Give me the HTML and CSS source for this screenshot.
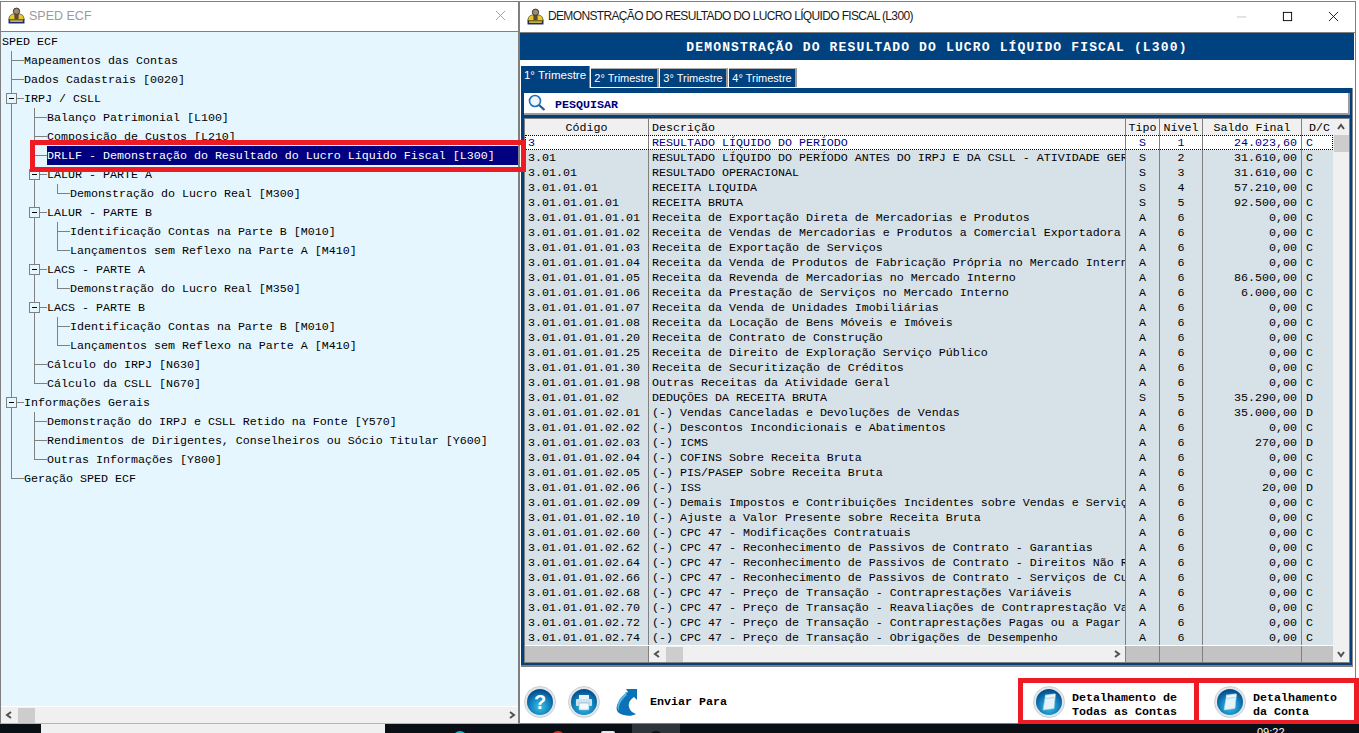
FILE: index.html
```html
<!DOCTYPE html>
<html lang="pt-BR">
<head>
<meta charset="utf-8">
<title>SPED ECF</title>
<link rel="stylesheet" href="styles.css">
</head>
<body>
<svg class="defs" width="0" height="0" aria-hidden="true">
  <defs>
    <radialGradient id="orb" cx="50%" cy="68%" r="62%">
      <stop offset="0%" stop-color="#3cc0e6"/>
      <stop offset="55%" stop-color="#1488c2"/>
      <stop offset="100%" stop-color="#04508f"/>
    </radialGradient>
    <symbol id="appicon" viewBox="0 0 16 16">
      <rect x="0.5" y="11" width="15" height="4.5" fill="#1c2a6e"/>
      <path d="M1 11c0-3 2-4 4-4.500h6c2 .5 4 1.500 4 4.500v1H1z" fill="#e8c828" stroke="#3a3000" stroke-width=".6"/>
      <rect x="6" y="6.500" width="4" height="5" fill="#5b4a35"/>
      <circle cx="8" cy="4" r="3" fill="#9a8a72" stroke="#2e2a22" stroke-width=".8"/>
      <rect x="2" y="12.500" width="12" height="1.500" fill="#d8c840"/>
    </symbol>
    <symbol id="orbbase" viewBox="0 0 32 32">
      <circle cx="16" cy="16" r="15.500" fill="#e4e7ea" stroke="#c3c8ce" stroke-width=".8"/>
      <circle cx="16" cy="16" r="13" fill="url(#orb)"/>
    </symbol>
    <symbol id="noteicon" viewBox="0 0 32 32">
      <path d="M12.500 9.500 22.500 8 21 22.500 10 24z" fill="#e6f3fa" stroke="#a9d0e4" stroke-width=".6"/>
      <path d="M13 8.500v2.500M15 8.300v2.500M17 8v2.500M19 7.800v2.500M21 7.600v2.500" stroke="#f7fcff" stroke-width="1"/>
      <path d="M13 12.500l8-1" stroke="#9cc8df" stroke-width=".7"/>
    </symbol>
    <symbol id="chev-l" viewBox="0 0 8 8"><path d="M6 1 2 4l4 3" fill="none" stroke="#505050" stroke-width="2"/></symbol>
    <symbol id="chev-r" viewBox="0 0 8 8"><path d="M2 1l4 3-4 3" fill="none" stroke="#505050" stroke-width="2"/></symbol>
    <symbol id="chev-u" viewBox="0 0 8 8"><path d="M1 6l3-4 3 4" fill="none" stroke="#505050" stroke-width="2"/></symbol>
    <symbol id="chev-d" viewBox="0 0 8 8"><path d="M1 2l3 4 3-4" fill="none" stroke="#505050" stroke-width="2"/></symbol>
  </defs>
</svg>

<div class="desktop">
  <section class="window window-tree">
    <header class="titlebar">
      <svg class="appicon"><use href="#appicon"/></svg>
      <span class="title title-muted">SPED ECF</span>
      <svg class="close close-muted" viewBox="0 0 12 12"><path d="M1 1l10 10M11 1 1 11" stroke="#9a9a9a" fill="none"/></svg>
    </header>
    <div class="tree">
      <svg class="tree-lines" viewBox="1 32 517 675">
        <g stroke="#808080" fill="none" shape-rendering="crispEdges">
          <path d="M11.500 51V478.500"/>
          <path d="M11.500 60.500H24M11.500 79.500H24M17 98.500H24M17 402.500H24M11.500 478.500H24"/>
          <path d="M34.500 108V383.500M34.500 412V459.500"/>
          <path d="M34.500 117.500H47M34.500 136.500H47M34.500 155.500H47M40 174.500H47M40 212.500H47M40 269.500H47M40 307.500H47M34.500 364.500H47M34.500 383.500H47M34.500 421.500H47M34.500 440.500H47M34.500 459.500H47"/>
          <path d="M57.500 184V193.500H70M57.500 222V250.500H70M57.500 231.500H70M57.500 279V288.500H70M57.500 317V345.500H70M57.500 326.500H70"/>
          <g fill="#e6f6ff">
            <rect x="6.500" y="93.500" width="10" height="10"/>
            <rect x="6.500" y="397.500" width="10" height="10"/>
            <rect x="29.500" y="169.500" width="10" height="10"/>
            <rect x="29.500" y="207.500" width="10" height="10"/>
            <rect x="29.500" y="264.500" width="10" height="10"/>
            <rect x="29.500" y="302.500" width="10" height="10"/>
          </g>
          <path stroke="#000" d="M9 98.500h5M9 402.500h5M32 174.500h5M32 212.500h5M32 269.500h5M32 307.500h5"/>
        </g>
      </svg>
      <div class="node lv0">SPED ECF</div>
      <div class="node lv1">Mapeamentos das Contas</div>
      <div class="node lv1">Dados Cadastrais [0020]</div>
      <div class="node lv1">IRPJ / CSLL</div>
      <div class="node lv2">Balanço Patrimonial [L100]</div>
      <div class="node lv2">Composição de Custos [L210]</div>
      <div class="node lv2 selected"><span class="node-sel">DRLLF - Demonstração do Resultado do Lucro Líquido Fiscal [L300]</span></div>
      <div class="node lv2">LALUR - PARTE A</div>
      <div class="node lv3">Demonstração do Lucro Real [M300]</div>
      <div class="node lv2">LALUR - PARTE B</div>
      <div class="node lv3">Identificação Contas na Parte B [M010]</div>
      <div class="node lv3">Lançamentos sem Reflexo na Parte A [M410]</div>
      <div class="node lv2">LACS - PARTE A</div>
      <div class="node lv3">Demonstração do Lucro Real [M350]</div>
      <div class="node lv2">LACS - PARTE B</div>
      <div class="node lv3">Identificação Contas na Parte B [M010]</div>
      <div class="node lv3">Lançamentos sem Reflexo na Parte A [M410]</div>
      <div class="node lv2">Cálculo do IRPJ [N630]</div>
      <div class="node lv2">Cálculo da CSLL [N670]</div>
      <div class="node lv1">Informações Gerais</div>
      <div class="node lv2">Demonstração do IRPJ e CSLL Retido na Fonte [Y570]</div>
      <div class="node lv2">Rendimentos de Dirigentes, Conselheiros ou Sócio Titular [Y600]</div>
      <div class="node lv2">Outras Informações [Y800]</div>
      <div class="node lv1">Geração SPED ECF</div>
    </div>
    <div class="hscroll">
      <svg class="chev"><use href="#chev-l"/></svg>
      <span class="thumb"></span>
      <svg class="chev chev-end"><use href="#chev-r"/></svg>
    </div>
  </section>

  <section class="window window-main">
    <header class="titlebar titlebar-main">
      <svg class="appicon"><use href="#appicon"/></svg>
      <span class="title title-main">DEMONSTRAÇÃO DO RESULTADO DO LUCRO LÍQUIDO FISCAL (L300)</span>
      <div class="wincontrols">
        <svg class="wc" viewBox="0 0 12 12"><path d="M1 6.500h10" stroke="#c4c4c4" fill="none"/></svg>
        <svg class="wc" viewBox="0 0 12 12"><rect x="1.500" y="1.500" width="9" height="9" stroke="#000" fill="none"/></svg>
        <svg class="wc" viewBox="0 0 12 12"><path d="M1 1l10 10M11 1 1 11" stroke="#111" fill="none"/></svg>
      </div>
    </header>
    <div class="banner">DEMONSTRAÇÃO DO RESULTADO DO LUCRO LÍQUIDO FISCAL (L300)</div>
    <nav class="tabs">
      <span class="tab tab-active">1° Trimestre</span>
      <span class="tab">2° Trimestre</span>
      <span class="tab">3° Trimestre</span>
      <span class="tab">4° Trimestre</span>
    </nav>
    <div class="panel">
      <div class="search">
        <svg class="search-icon" viewBox="0 0 18 18"><circle cx="7" cy="7" r="5.500" fill="#eef6fc" stroke="#1d6fb8" stroke-width="1.600"/><path d="M11 11l5.500 5" stroke="#1d5a98" stroke-width="2.200" fill="none"/></svg>
        <span class="search-label">PESQUISAR</span>
      </div>
      <div class="grid">
        <div class="grid-main">
          <div class="row row-head"><span>Código</span><span class="left">Descrição</span><span>Tipo</span><span>Nível</span><span>Saldo Final</span><span>D/C</span></div>
          <div class="row row-current"><span>3</span><span>RESULTADO LÍQUIDO DO PERÍODO</span><span>S</span><span>1</span><span>24.023,60</span><span>C</span></div>
          <div class="row"><span>3.01</span><span>RESULTADO LÍQUIDO DO PERÍODO ANTES DO IRPJ E DA CSLL - ATIVIDADE GERAL</span><span>S</span><span>2</span><span>31.610,00</span><span>C</span></div>
          <div class="row"><span>3.01.01</span><span>RESULTADO OPERACIONAL</span><span>S</span><span>3</span><span>31.610,00</span><span>C</span></div>
          <div class="row"><span>3.01.01.01</span><span>RECEITA LIQUIDA</span><span>S</span><span>4</span><span>57.210,00</span><span>C</span></div>
          <div class="row"><span>3.01.01.01.01</span><span>RECEITA BRUTA</span><span>S</span><span>5</span><span>92.500,00</span><span>C</span></div>
          <div class="row"><span>3.01.01.01.01.01</span><span>Receita de Exportação Direta de Mercadorias e Produtos</span><span>A</span><span>6</span><span>0,00</span><span>C</span></div>
          <div class="row"><span>3.01.01.01.01.02</span><span>Receita de Vendas de Mercadorias e Produtos a Comercial Exportadora</span><span>A</span><span>6</span><span>0,00</span><span>C</span></div>
          <div class="row"><span>3.01.01.01.01.03</span><span>Receita de Exportação de Serviços</span><span>A</span><span>6</span><span>0,00</span><span>C</span></div>
          <div class="row"><span>3.01.01.01.01.04</span><span>Receita da Venda de Produtos de Fabricação Própria no Mercado Interno</span><span>A</span><span>6</span><span>0,00</span><span>C</span></div>
          <div class="row"><span>3.01.01.01.01.05</span><span>Receita da Revenda de Mercadorias no Mercado Interno</span><span>A</span><span>6</span><span>86.500,00</span><span>C</span></div>
          <div class="row"><span>3.01.01.01.01.06</span><span>Receita da Prestação de Serviços no Mercado Interno</span><span>A</span><span>6</span><span>6.000,00</span><span>C</span></div>
          <div class="row"><span>3.01.01.01.01.07</span><span>Receita da Venda de Unidades Imobiliárias</span><span>A</span><span>6</span><span>0,00</span><span>C</span></div>
          <div class="row"><span>3.01.01.01.01.08</span><span>Receita da Locação de Bens Móveis e Imóveis</span><span>A</span><span>6</span><span>0,00</span><span>C</span></div>
          <div class="row"><span>3.01.01.01.01.20</span><span>Receita de Contrato de Construção</span><span>A</span><span>6</span><span>0,00</span><span>C</span></div>
          <div class="row"><span>3.01.01.01.01.25</span><span>Receita de Direito de Exploração Serviço Público</span><span>A</span><span>6</span><span>0,00</span><span>C</span></div>
          <div class="row"><span>3.01.01.01.01.30</span><span>Receita de Securitização de Créditos</span><span>A</span><span>6</span><span>0,00</span><span>C</span></div>
          <div class="row"><span>3.01.01.01.01.98</span><span>Outras Receitas da Atividade Geral</span><span>A</span><span>6</span><span>0,00</span><span>C</span></div>
          <div class="row"><span>3.01.01.01.02</span><span>DEDUÇÕES DA RECEITA BRUTA</span><span>S</span><span>5</span><span>35.290,00</span><span>D</span></div>
          <div class="row"><span>3.01.01.01.02.01</span><span>(-) Vendas Canceladas e Devoluções de Vendas</span><span>A</span><span>6</span><span>35.000,00</span><span>D</span></div>
          <div class="row"><span>3.01.01.01.02.02</span><span>(-) Descontos Incondicionais e Abatimentos</span><span>A</span><span>6</span><span>0,00</span><span>C</span></div>
          <div class="row"><span>3.01.01.01.02.03</span><span>(-) ICMS</span><span>A</span><span>6</span><span>270,00</span><span>D</span></div>
          <div class="row"><span>3.01.01.01.02.04</span><span>(-) COFINS Sobre Receita Bruta</span><span>A</span><span>6</span><span>0,00</span><span>C</span></div>
          <div class="row"><span>3.01.01.01.02.05</span><span>(-) PIS/PASEP Sobre Receita Bruta</span><span>A</span><span>6</span><span>0,00</span><span>C</span></div>
          <div class="row"><span>3.01.01.01.02.06</span><span>(-) ISS</span><span>A</span><span>6</span><span>20,00</span><span>D</span></div>
          <div class="row"><span>3.01.01.01.02.09</span><span>(-) Demais Impostos e Contribuições Incidentes sobre Vendas e Serviços</span><span>A</span><span>6</span><span>0,00</span><span>C</span></div>
          <div class="row"><span>3.01.01.01.02.10</span><span>(-) Ajuste a Valor Presente sobre Receita Bruta</span><span>A</span><span>6</span><span>0,00</span><span>C</span></div>
          <div class="row"><span>3.01.01.01.02.60</span><span>(-) CPC 47 - Modificações Contratuais</span><span>A</span><span>6</span><span>0,00</span><span>C</span></div>
          <div class="row"><span>3.01.01.01.02.62</span><span>(-) CPC 47 - Reconhecimento de Passivos de Contrato - Garantias</span><span>A</span><span>6</span><span>0,00</span><span>C</span></div>
          <div class="row"><span>3.01.01.01.02.64</span><span>(-) CPC 47 - Reconhecimento de Passivos de Contrato - Direitos Não Resgatados</span><span>A</span><span>6</span><span>0,00</span><span>C</span></div>
          <div class="row"><span>3.01.01.01.02.66</span><span>(-) CPC 47 - Reconhecimento de Passivos de Contrato - Serviços de Custódia</span><span>A</span><span>6</span><span>0,00</span><span>C</span></div>
          <div class="row"><span>3.01.01.01.02.68</span><span>(-) CPC 47 - Preço de Transação - Contraprestações Variáveis</span><span>A</span><span>6</span><span>0,00</span><span>C</span></div>
          <div class="row"><span>3.01.01.01.02.70</span><span>(-) CPC 47 - Preço de Transação - Reavaliações de Contraprestação Variável</span><span>A</span><span>6</span><span>0,00</span><span>C</span></div>
          <div class="row"><span>3.01.01.01.02.72</span><span>(-) CPC 47 - Preço de Transação - Contraprestações Pagas ou a Pagar</span><span>A</span><span>6</span><span>0,00</span><span>C</span></div>
          <div class="row"><span>3.01.01.01.02.74</span><span>(-) CPC 47 - Preço de Transação - Obrigações de Desempenho</span><span>A</span><span>6</span><span>0,00</span><span>C</span></div>
          <div class="row-fill"></div>
          <div class="row row-scroll">
            <span></span>
            <span class="scroll-cell">
              <svg class="chev"><use href="#chev-l"/></svg>
              <i class="thumb thumb-grid"></i>
              <svg class="chev chev-end"><use href="#chev-r"/></svg>
            </span>
            <span></span><span></span><span></span><span></span>
          </div>
        </div>
        <div class="vscroll">
          <svg class="chev"><use href="#chev-u"/></svg>
          <i class="thumb-v"></i>
          <svg class="chev chev-bottom"><use href="#chev-d"/></svg>
        </div>
      </div>
    </div>
    <footer class="toolbar">
      <svg class="orb" viewBox="0 0 32 32"><use href="#orbbase" width="32" height="32"/><text x="16" y="23" class="orb-q">?</text></svg>
      <svg class="orb" viewBox="0 0 32 32"><use href="#orbbase" width="32" height="32"/><path d="M11 9h10v4H11z" fill="#e8f2f8"/><rect x="8" y="13" width="16" height="7" rx="1" fill="#cfe3ee"/><rect x="11" y="17" width="10" height="7" fill="#f4f9fc" stroke="#6fa9c9" stroke-width=".6"/></svg>
      <svg class="send-icon" viewBox="0 0 21 27"><path d="M10 0H21V11L18 8C14 11 12 14 13 18C14 22 17 24 20 25C15 28 8 27 3 24C0 22 0 18 2 14C4 9 7 6 12 3Z" fill="#0c72b8"/><path d="M3 22C2 17 5 11 11 6L9 3 12 3C7 6 4 9 2 14C1 17 1 20 3 22Z" fill="#55b4e2"/></svg>
      <span class="tool-label tool-send">Enviar Para</span>
      <div class="detail detail-all">
        <svg class="orb" viewBox="0 0 32 32"><use href="#orbbase" width="32" height="32"/><use href="#noteicon" width="32" height="32"/></svg>
        <span class="tool-label">Detalhamento de<br>Todas as Contas</span>
      </div>
      <div class="detail detail-one">
        <svg class="orb" viewBox="0 0 32 32"><use href="#orbbase" width="32" height="32"/><use href="#noteicon" width="32" height="32"/></svg>
        <span class="tool-label">Detalhamento<br>da Conta</span>
      </div>
    </footer>
  </section>

  <div class="mark mark-tree"></div>
  <div class="mark mark-all"></div>
  <div class="mark mark-one"></div>

  <div class="taskbar">
    <span class="task-app"></span>
    <span class="tray-dot dot-cyan"></span>
    <span class="tray-dot dot-red"></span>
    <span class="tray-dot dot-white"></span>
    <span class="task-active"><i class="tray-dot dot-dark"></i></span>
    <span class="clock">09:22</span>
  </div>
</div>
</body>
</html>
```

FILE: styles.css
```css
* { box-sizing: border-box; }

html, body {
  margin: 0;
  height: 733px;
  overflow: hidden;
  background: #fff;
}

.defs { position: absolute; }

.desktop {
  position: relative;
  width: 1359px;
  height: 733px;
  overflow: hidden;
  font-family: "Liberation Mono", "Courier New", monospace;
  font-size: 11.67px;
  color: #000;
}

.window {
  position: absolute;
  top: 1px;
  display: flex;
  flex-direction: column;
  height: 723px;
  background: #fff;
  border: 1px solid #7f7f7f;
}

.window-tree { left: 0; width: 519px; border-bottom-color: #b5b5b5; }
.window-main { left: 519px; width: 837px; }

.titlebar {
  display: flex;
  align-items: center;
  flex: none;
  height: 30px;
  padding: 0 12px 2px 7px;
  border-bottom: 1px solid #808080;
  background: #fff;
}

.titlebar-main { height: 31px; padding-right: 0; }

.appicon { width: 17px; height: 17px; flex: none; }

.title {
  margin-left: 4px;
  font: 12px "Liberation Sans", Arial, sans-serif;
  color: #1a1a1a;
  white-space: nowrap;
}

.title-main { letter-spacing: -0.650px; }
.title-muted { color: #9a9a9a; font-size: 12.500px; }

.close { width: 11px; height: 11px; margin-left: auto; }

.wincontrols { display: flex; align-items: center; margin-left: auto; }
.wc { width: 11px; height: 11px; margin-right: 35px; }
.wc:last-child { margin-right: 16px; }

/* tree */
.tree {
  position: relative;
  flex: 1;
  background: #e6f6ff;
  border-bottom: 1px solid #fff;
  overflow: hidden;
}

.tree-lines {
  position: absolute;
  left: 0;
  top: 0;
  width: 517px;
  height: 675px;
}

.node {
  position: relative;
  display: flex;
  height: 19px;
  line-height: 21px;
  white-space: nowrap;
}

.lv0 { padding-left: 1px; }
.lv1 { padding-left: 23px; }
.lv2 { padding-left: 46px; }
.lv3 { padding-left: 69px; }

.node-sel {
  flex: 1;
  background: #000080;
  color: #fff;
}

.hscroll {
  display: flex;
  align-items: center;
  flex: none;
  height: 16px;
  padding: 0 2px 0 4px;
  background: #f0f0f0;
}

.chev { width: 8px; height: 8px; flex: none; }
.chev-end { margin-left: auto; }

.thumb {
  width: 17px;
  height: 15px;
  margin-left: 5px;
  background: #cdcdcd;
}

/* main window */
.banner {
  flex: none;
  height: 27px;
  line-height: 29px;
  background: #00417f;
  color: #fff;
  font-weight: 700;
  font-size: 13px;
  letter-spacing: 1.150px;
  text-align: center;
  margin-right: 1px;
}

.tabs {
  display: flex;
  align-items: flex-end;
  gap: 1px;
  flex: none;
  height: 28px;
  padding-left: 1px;
}

.tab {
  width: 68px;
  height: 19px;
  margin-bottom: 1px;
  text-align: center;
  background: #00417f;
  color: #fff;
  border-right: 2px solid #9a9a9a;
  border-top: 1px solid #b0b0b0;
  font: 11px/18px "Liberation Sans", Arial, sans-serif;
  white-space: nowrap;
}

.tab-active {
  width: 69px;
  height: 22px;
  margin-bottom: 0;
  border-right: 1px solid #8a8a8a;
  border-top: 0;
  padding-bottom: 3px;
  font-size: 11.500px;
}

.panel {
  display: flex;
  flex-direction: column;
  flex: none;
  width: 832px;
  height: 579px;
  margin-left: 1px;
  padding: 5px 2px 2px 3px;
  background: #00417f;
  border-right: 1px solid #8a8a8a;
  border-bottom: 2px solid #7f7f7f;
}

.search {
  display: flex;
  align-items: center;
  flex: none;
  height: 22px;
  padding-left: 4px;
  background: #fff;
  border-right: 2px solid #9a9a9a;
  border-bottom: 2px solid #9a9a9a;
}

.search-icon { width: 18px; height: 18px; }

.search-label {
  margin-left: 9px;
  padding-top: 3px;
  font-weight: 700;
  color: #000080;
}

.grid {
  display: flex;
  flex: none;
  height: 545px;
  margin-top: 3px;
  border: 1px solid #808080;
  background: #f0f0f0;
}

.grid-main {
  display: flex;
  flex-direction: column;
  width: 808px;
  flex: none;
}

.row {
  display: grid;
  grid-template-columns: 124px 477px 34px 43px 99px 31px;
  flex: none;
  height: 15px;
  line-height: 17px;
  background: #d6e1e8;
}

.row > span {
  overflow: hidden;
  white-space: nowrap;
  padding-left: 3px;
  border-right: 1px solid #808080;
}

.row > span:nth-child(3),
.row > span:nth-child(4) { padding-left: 0; text-align: center; }

.row > span:nth-child(5) { padding: 0 4px 0 0; text-align: right; }
.row > span:nth-child(6) { padding-left: 4px; border-right: 0; }

.row-head {
  height: 16px;
  line-height: 19px;
  background: #f0f0f0;
}

.row-head > span { text-align: center; padding: 0; }
.row-head > span.left { text-align: left; padding-left: 3px; }
.row-head > span:nth-child(5) { padding: 0; text-align: center; }

.row-current {
  background: #fff;
  color: #000080;
  outline: 1px dotted #000;
  outline-offset: -1px;
}

.row-fill { flex: none; height: 1px; background: #fff; }

.row-scroll {
  flex: 1;
  height: auto;
  background: #c3c3c3;
}

.row-scroll > span.scroll-cell {
  display: flex;
  align-items: center;
  padding: 0 4px 0 4px;
  background: #f0f0f0;
}

.thumb-grid { display: block; height: 15px; }

.vscroll {
  display: flex;
  flex-direction: column;
  align-items: center;
  flex: 1;
  padding-top: 4px;
  background: #f0f0f0;
}

.thumb-v {
  display: block;
  width: 15px;
  height: 17px;
  margin-top: 4px;
  background: #cdcdcd;
}

.chev-bottom { margin-top: auto; margin-bottom: 4px; }

/* toolbar */
.toolbar {
  display: flex;
  align-items: center;
  flex: 1;
  padding: 14px 0 0 4px;
}

.orb { width: 32px; height: 32px; flex: none; margin-right: 12px; }

.orb-q {
  font: 700 20px "Liberation Sans", Arial, sans-serif;
  fill: #fff;
  text-anchor: middle;
}

.send-icon { width: 21px; height: 27px; margin-left: 4px; flex: none; }

.tool-label {
  font-weight: 700;
  line-height: 14px;
  color: #000;
  white-space: nowrap;
}

.tool-send { margin-left: 13px; }

.detail {
  display: flex;
  align-items: center;
  flex: none;
}

.detail .tool-label { margin-top: 6px; }
.detail .orb { margin-right: 7px; }
.detail-all { width: 181px; margin-left: auto; }
.detail-one { width: 141px; }

/* annotation rectangles */
.mark {
  position: absolute;
  border: 5px solid #ed1c24;
  pointer-events: none;
}

.mark-tree { left: 30px; top: 140px; width: 496px; height: 32px; }
.mark-all { left: 1018px; top: 678px; width: 181px; height: 47px; }
.mark-one { left: 1194px; top: 678px; width: 165px; height: 47px; }

/* taskbar */
.taskbar {
  position: absolute;
  left: 0;
  right: 0;
  bottom: 0;
  height: 9px;
  background: #0a0f15;
  overflow: hidden;
}

.task-app {
  position: absolute;
  left: 41px;
  top: 0;
  width: 344px;
  height: 9px;
  background: #f0f0f0;
}

.task-active {
  position: absolute;
  left: 632px;
  top: 0;
  width: 48px;
  height: 9px;
  background: #30353b;
}

.tray-dot {
  position: absolute;
  top: 7px;
  width: 14px;
  height: 14px;
  border-radius: 50%;
}

.dot-cyan { left: 453px; background: #19b7c9; }
.dot-red { left: 551px; background: #e0312b; }
.dot-white { left: 601px; background: #e8e8e8; border-radius: 2px; }
.dot-dark { left: 17px; background: #0a0f15; }

.clock {
  position: absolute;
  left: 1257px;
  top: 2px;
  font: 11px "Liberation Sans", Arial, sans-serif;
  color: #fff;
}
```
